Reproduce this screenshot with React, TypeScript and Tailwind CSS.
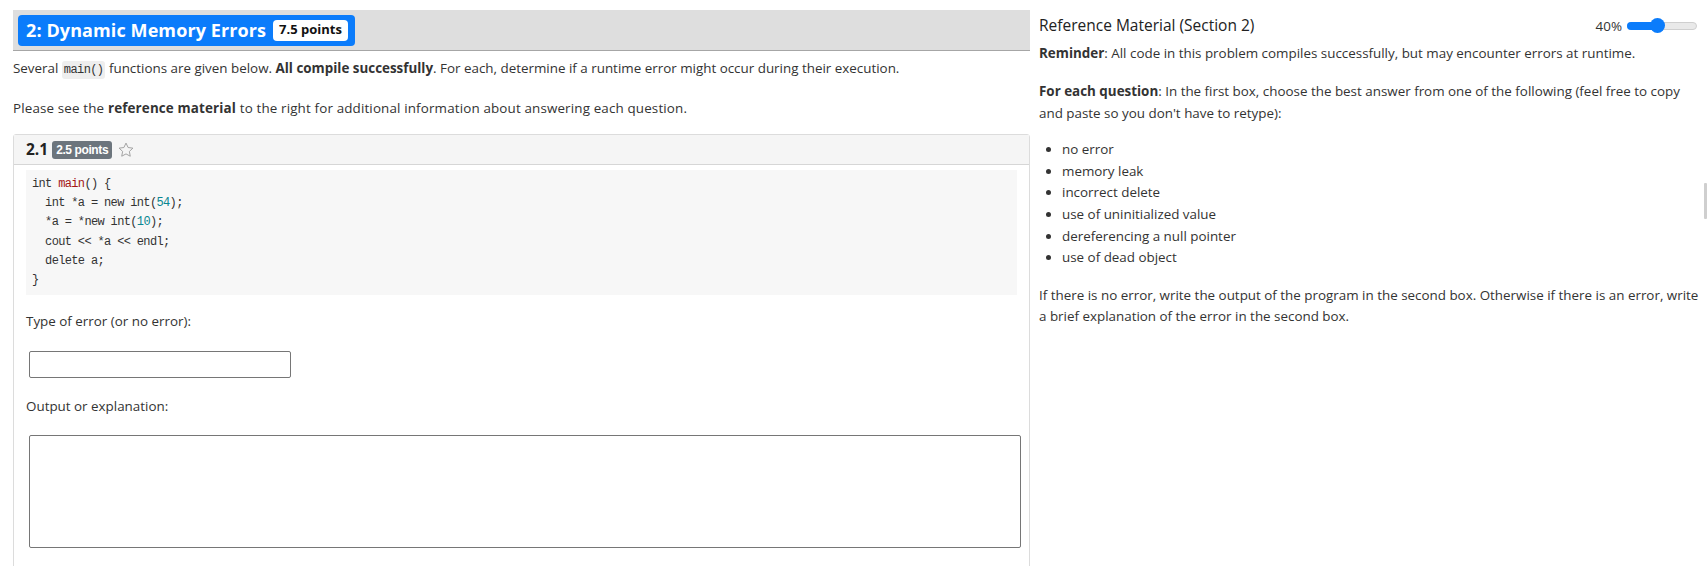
import React from "react";

const sans = "font-['Open_Sans','Noto_Sans',sans-serif]";

function Code() {
  const mono = "font-['Liberation_Mono','DejaVu_Sans_Mono',monospace] text-[12px] leading-[19.2px] tracking-[-0.65px] text-[#333]";
  return (
    <div className={`bg-[#f7f7f7] pt-[5px] pb-[5px] pl-[6px] ${mono}`}>
      <div className="whitespace-pre">int <span className="text-[#a31515]">main</span>() {"{"}</div>
      <div className="whitespace-pre">  int *a = new int(<span className="text-[#098691]">54</span>);</div>
      <div className="whitespace-pre">  *a = *new int(<span className="text-[#098691]">10</span>);</div>
      <div className="whitespace-pre">  cout &lt;&lt; *a &lt;&lt; endl;</div>
      <div className="whitespace-pre">  delete a;</div>
      <div className="whitespace-pre">{"}"}</div>
    </div>
  );
}

export default function App() {
  return (
    <div className={`relative w-[1708px] h-[566px] overflow-hidden bg-white text-[#212529] ${sans}`}>
      <div className="flex">
        {/* Left column */}
        <div className="w-[1030px] shrink-0 pl-[13px] pt-[10px]">
          <div className="h-[41px] bg-[#dedede] border-b border-[#a6a6a6] flex items-center pl-[5px]">
            <div className="h-[31px] rounded-[4px] bg-[#0b7cfb] flex items-center pl-[8px] pr-[7px] gap-[7px]">
              <span className="text-white font-bold text-[18px] tracking-[0.1px]">2: Dynamic Memory Errors</span>
              <span className="bg-white text-[#111] font-bold text-[13px] rounded-[4px] px-[6px] h-[21px] flex items-center">7.5 points</span>
            </div>
          </div>
          <p className="text-[13.4px] leading-[21px] mt-[7px] text-[#333]">
            Several <code className="font-['Liberation_Mono',monospace] text-[12px] tracking-[-0.6px] bg-[#eeeeee] rounded-[3px] px-[2px] py-[2px]">main()</code> functions are given below. <b>All compile successfully</b>. For each, determine if a runtime error might occur during their execution.
          </p>
          <p className="text-[13.4px] leading-[21px] mt-[17px] text-[#333] tracking-[0.15px]">
            Please see the <b>reference material</b> to the right for additional information about answering each question.
          </p>
          <div className="mt-[15px] border border-[#dcdcdc] rounded-t-[3px] h-[500px]">
            <div className="h-[30px] bg-[#f5f5f5] border-b border-[#d6d6d6] flex items-center pl-[12px] gap-[4px]">
              <span className="font-bold text-[15.5px] text-[#222]">2.1</span>
              <span className="bg-[#6c757d] text-white text-[12px] font-bold rounded-[3px] px-[4px] h-[18px] flex items-center tracking-[-0.4px] font-['Liberation_Sans_Narrow','Liberation_Sans',sans-serif]">2.5 points</span>
              <svg width="18" height="18" viewBox="0 0 24 24" className="ml-[1px]">
                <path d="M12 2.8l2.8 5.9 6.4.8-4.7 4.4 1.2 6.4L12 17.2l-5.7 3.1 1.2-6.4-4.7-4.4 6.4-.8z" fill="none" stroke="#9a9a9a" strokeWidth="1.2" strokeLinejoin="round" />
              </svg>
            </div>
            <div className="px-[12px] pt-[5px]">
              <Code />
              <p className="text-[13.4px] leading-[21px] mt-[16px] text-[#333]">Type of error (or no error):</p>
              <div className="mt-[19px] ml-[3px] w-[262px] h-[27px] border border-[#767676] rounded-[2px] bg-white" />
              <p className="text-[13.4px] leading-[21px] mt-[18px] text-[#333]">Output or explanation:</p>
              <div className="mt-[18px] ml-[3px] w-[992px] h-[113px] border border-[#767676] rounded-[2px] bg-white" />
            </div>
          </div>
        </div>
        {/* Right column */}
        <div className="w-[678px] shrink-0 pl-[9px] pr-[4px] pt-[15px] text-[#333]">
          <div className="flex items-center justify-between h-[22px] pr-[7px]">
            <span className="text-[15.5px] text-[#222]">Reference Material (Section 2)</span>
            <div className="flex items-center gap-[5px]">
              <span className="text-[13.4px]">40%</span>
              <div className="relative w-[70px] h-[8px] rounded-full bg-[#e9e9e9] border border-[#cfcfcf]">
                <div className="absolute left-[-1px] top-[-1px] h-[8px] w-[32px] rounded-full bg-[#0b7cfb]" />
                <div className="absolute left-[22px] top-[-5px] w-[15px] h-[15px] rounded-full bg-[#0b7cfb]" />
              </div>
            </div>
          </div>
          <p className="text-[13.4px] leading-[21px] mt-[6px]"><b>Reminder</b>: All code in this problem compiles successfully, but may encounter errors at runtime.</p>
          <p className="text-[13.4px] leading-[21.6px] mt-[17px] pr-[6px]"><b>For each question</b>: In the first box, choose the best answer from one of the following (feel free to copy and paste so you don't have to retype):</p>
          <ul className="list-disc pl-[23px] mt-[15px] text-[13.4px] leading-[21.6px]">
            <li>no error</li>
            <li>memory leak</li>
            <li>incorrect delete</li>
            <li>use of uninitialized value</li>
            <li>dereferencing a null pointer</li>
            <li>use of dead object</li>
          </ul>
          <p className="text-[13.4px] leading-[21.6px] mt-[16px] pr-[2px]">If there is no error, write the output of the program in the second box. Otherwise if there is an error, write a brief explanation of the error in the second box.</p>
        </div>
      </div>
      <div className="absolute left-[1704px] top-[183px] w-[3px] h-[36px] bg-[#cfcfcf] rounded-[1px]" />
    </div>
  );
}
